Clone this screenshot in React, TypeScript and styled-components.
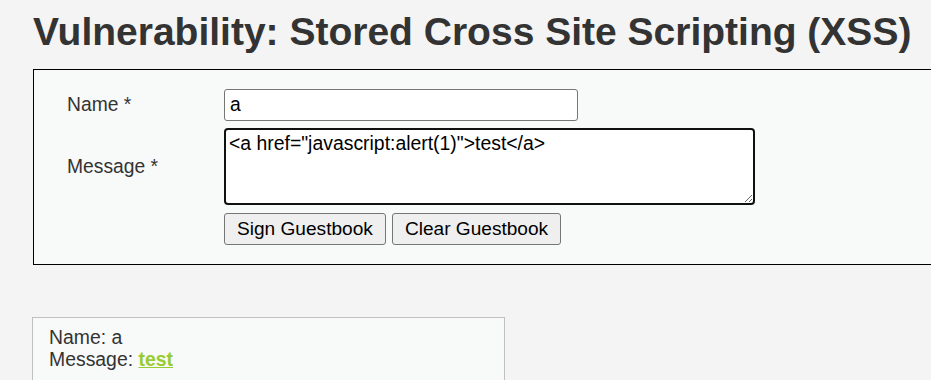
import React from 'react'
import styled, { createGlobalStyle } from 'styled-components'

const GlobalStyle = createGlobalStyle`
  * { box-sizing: border-box; }
  html, body { margin: 0; overflow: hidden; }
  body {
    background: #f4f4f4;
    color: #333;
    font-family: "Liberation Sans", Arial, sans-serif;
  }
`

const Page = styled.div`
  padding: 8px 0 0 33px;
  width: 931px;
  overflow: hidden;
`

const Heading = styled.h1`
  margin: 0 0 13px;
  font-size: 39px;
  line-height: 48px;
  font-weight: 700;
  color: #333;
  white-space: nowrap;
`

const FormBox = styled.div`
  width: 940px;
  border: 1px solid #000;
  background: #f8f9f9;
  padding: 19px 0 19px 33px;
`

const FormGrid = styled.div`
  display: grid;
  grid-template-columns: 157px auto;
  row-gap: 7px;
  align-items: center;
`

const Label = styled.div`
  font-size: 19.3px;
  color: #333;
`

const TextInput = styled.input`
  width: 354px;
  height: 32px;
  border: 1px solid #767676;
  border-radius: 3px;
  background: #fff;
  padding: 0 5px;
  font: 19.3px "Liberation Sans", Arial, sans-serif;
  color: #000;
  outline: none;
`

const MessageArea = styled.textarea`
  width: 531px;
  height: 77px;
  border: 2px solid #101010;
  border-radius: 4px;
  background: #fff;
  padding: 2px 3px;
  font: 19.4px/22px "Liberation Sans", Arial, sans-serif;
  color: #000;
  outline: none;
  resize: both;
  display: block;
`

const Buttons = styled.div`
  grid-column: 2;
  display: flex;
  gap: 6px;
  margin-top: 1px;
`

const Button = styled.button`
  height: 32px;
  padding: 0 12px;
  border: 1px solid #767676;
  border-radius: 3px;
  background: #efefef;
  color: #000;
  font: 19.1px "Liberation Sans", Arial, sans-serif;
`

const Entry = styled.div`
  margin: 52px 0 0 -1px;
  width: 473px;
  border: 1px solid #c0c0c0;
  background: #f8f9f9;
  padding: 8px 16px 20px;
  font-size: 19.4px;
  line-height: 22px;
  color: #333;
`

const GreenLink = styled.a`
  color: #99cc33;
  font-weight: 700;
  text-decoration: underline;
`

const App: React.FC = () => {
  return (
    <>
      <GlobalStyle />
      <Page>
        <Heading>Vulnerability: Stored Cross Site Scripting (XSS)</Heading>
        <FormBox>
          <FormGrid>
            <Label>Name *</Label>
            <TextInput defaultValue="a" />
            <Label>Message *</Label>
            <MessageArea defaultValue={'<a href="javascript:alert(1)">test</a>'} />
            <Buttons>
              <Button>Sign Guestbook</Button>
              <Button>Clear Guestbook</Button>
            </Buttons>
          </FormGrid>
        </FormBox>
        <Entry>
          Name: a
          <br />
          Message: <GreenLink href="#">test</GreenLink>
        </Entry>
      </Page>
    </>
  )
}

export default App
